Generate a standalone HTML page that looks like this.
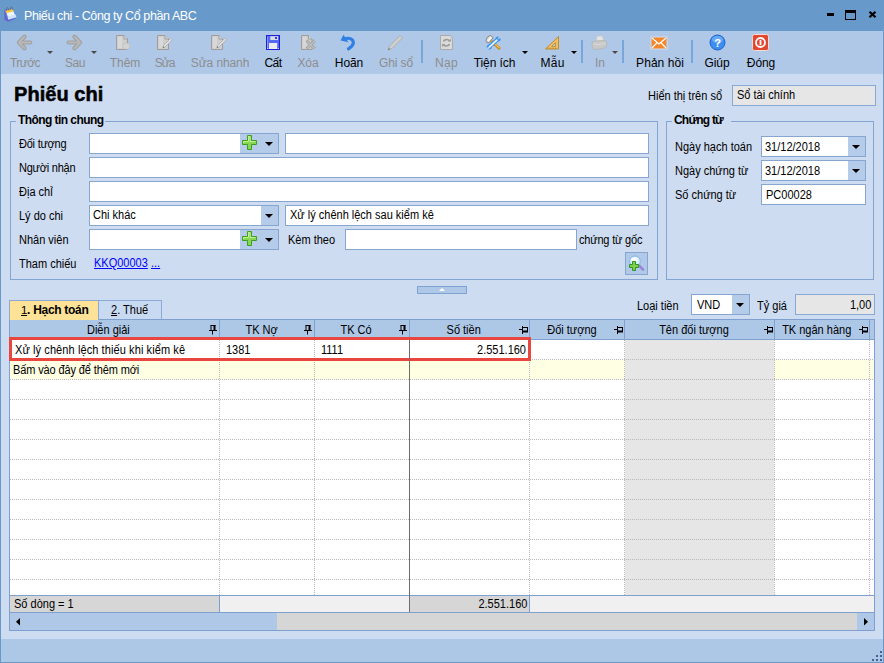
<!DOCTYPE html>
<html><head><meta charset="utf-8"><title>Phiếu chi</title>
<style>
*{box-sizing:border-box;margin:0;padding:0}
html,body{width:884px;height:663px;overflow:hidden}
body{position:relative;background:#6899cb;font-family:"Liberation Sans",sans-serif;font-size:11px;color:#000}
.a{position:absolute;white-space:nowrap}
.tl{font-size:12px;line-height:14px;top:56px;color:#8d8d8d;transform:translateX(-50%);letter-spacing:-0.100px}
.tl.on{color:#000}
.ic{top:34px;width:20px;height:18px}
.da{top:51px;width:0;height:0;border-left:3px solid transparent;border-right:3px solid transparent;border-top:3px solid #4a4a4a}
.da.on{border-top-color:#000}
.sep{top:40px;width:2px;height:23px;background:#7aa5da}
.lb{line-height:13px;font-size:12px;transform:scaleX(.917);transform-origin:0 50%}
.t{display:inline-block;font-size:12px;transform:scaleX(.917);transform-origin:0 50%}
.t.r{transform-origin:100% 50%}
.t.c{transform-origin:50% 50%}
.in{background:#fff;border:1px solid #86a5cf;height:21px;line-height:17px;padding-left:3px}
.btn{background:#b4cbe9}
.arr{width:0;height:0;border-left:4px solid transparent;border-right:4px solid transparent;border-top:4px solid #000}
.gb{border:1px solid #84a5d3}
.gt{font-weight:bold;background:#cddcf1;padding:0 2px;line-height:13px}
.hd{top:320px;height:19px;border-right:1px solid #7fa0d1;text-align:center;line-height:20px}
.hl{left:10px;width:864px;height:1px;background:repeating-linear-gradient(90deg,#b8b8b8 0 1px,transparent 1px 2px)}
.vl{top:340px;width:1px;height:256px;background:repeating-linear-gradient(180deg,#b8b8b8 0 1px,transparent 1px 2px)}
.pin{right:2px;top:5px}
.hd{padding-right:12px}
.ft{top:596px;height:16px;background:#d6d6d6;line-height:17px}
</style></head><body>
<div class="a" style="left:1px;top:31px;width:882px;height:631px;background:#cddcf1"></div>
<!-- TITLE -->
<div class="a" style="left:0;top:0;width:884px;height:31px;background:#6899cb">
<span class="a" style="left:24px;top:8px;font-size:12.500px;color:#fff;line-height:16px;letter-spacing:-0.400px">Phiếu chi - Công ty Cổ phần ABC</span>
<svg class="a" style="left:3px;top:5px" width="16" height="18" viewBox="0 0 16 18"><path d="M1.200 4.800 L9.500 3.500 L13 13.500 L5 16.700 L1.500 14.500 Z" fill="#6a5fd0"/><path d="M2.500 5.500 L9.800 4 L13.600 12.300 L5.200 14.800 Z" fill="#eef5ff" stroke="#3f8fe6" stroke-width="0.800"/><path d="M4.800 11 L12.500 9.500 L13.400 12.200 L5.300 14.600Z" fill="#cfe4fb"/><path d="M2.500 5.500 L9.800 4 L10.800 6.300 L3.300 8.300 Z" fill="#f6c63c"/><path d="M3.500 5.800 C3 1.500 5.500 1.500 5.700 5.500 M7.500 5 C7 0.800 9.500 0.800 9.700 4.800" fill="none" stroke="#6b6b78" stroke-width="0.900"/></svg>
<div class="a" style="left:827px;top:13px;width:7px;height:3px;background:#000"></div>
<div class="a" style="left:845px;top:10px;width:11px;height:10px;border:1px solid #000;border-top-width:3px"></div>
<svg class="a" style="left:868px;top:10px" width="9" height="9" viewBox="0 0 9 9"><path d="M1.500 1.700L7.500 7.300M7.500 1.700L1.500 7.300" stroke="#000" stroke-width="2.200"/></svg>
</div>
<!-- TOOLBAR -->
<div class="a" style="left:1px;top:31px;width:882px;height:43px;background:#afc8e8"></div>
<svg class="a" style="left:16px;top:34px" width="17" height="17" viewBox="0 0 17 17"><path d="M8.500 2.700 L3 8.500 L8.500 14.300 M4 8.500 H14.300" fill="none" stroke="#a0a0a0" stroke-width="4.200" stroke-linecap="round" stroke-linejoin="round"/><path d="M8.500 2.700 L3 8.500 L8.500 14.300 M4 8.500 H14.300" fill="none" stroke="#b8b8b8" stroke-width="2" stroke-linecap="round" stroke-linejoin="round"/></svg>
<svg class="a" style="left:66px;top:34px" width="17" height="17" viewBox="0 0 17 17"><path d="M8.500 2.700 L14 8.500 L8.500 14.300 M13 8.500 H2.700" fill="none" stroke="#a0a0a0" stroke-width="4.200" stroke-linecap="round" stroke-linejoin="round"/><path d="M8.500 2.700 L14 8.500 L8.500 14.300 M13 8.500 H2.700" fill="none" stroke="#b8b8b8" stroke-width="2" stroke-linecap="round" stroke-linejoin="round"/></svg>
<svg class="a" style="left:116px;top:35px" width="16" height="16" viewBox="0 0 16 16"><path d="M0.500 0.500 H8 L11.500 4 V14.500 H0.500 Z" fill="#cecece" stroke="#9e9e9e"/><path d="M8 0.500 V4 H11.500" fill="#dedede" stroke="#9e9e9e"/><path d="M2 2 H6 V13 H2 Z" fill="#d8d8d8"/><path d="M10 7.200 l1 1.300 1.600-0.600 0.100 1.600 1.700 0.500 -1 1.300 0.800 1.400 -1.700 0.300 -0.400 1.500 -1.500-0.800 -1.300 0.900 -0.700-1.500 -1.700-0.100 0.600-1.500 -1.100-1.200 1.500-0.600 0.100-1.600 1.500 0.500Z" fill="#d4d4d4" stroke="#bdbdbd" stroke-width="0.600"/></svg>
<svg class="a" style="left:157px;top:35px" width="17" height="16" viewBox="0 0 17 16"><path d="M0.500 0.500 H8 L11.500 4 V14.500 H0.500 Z" fill="#cecece" stroke="#9e9e9e"/><path d="M8 0.500 V4 H11.500" fill="#dedede" stroke="#9e9e9e"/><path d="M2 2 H6 V13 H2 Z" fill="#d8d8d8"/><path d="M13.800 3.300 L6.500 10.500 L5.800 12.700 L8 12 L15.200 4.800 Z" fill="#e2e2e2" stroke="#b0b0b0" stroke-width="0.900"/><path d="M5.800 12.700 L6.300 11.200 L7.300 12.200Z" fill="#555"/></svg>
<svg class="a" style="left:211px;top:35px" width="17" height="16" viewBox="0 0 17 16"><path d="M0.500 0.500 H8 L11.500 4 V14.500 H0.500 Z" fill="#cecece" stroke="#9e9e9e"/><path d="M8 0.500 V4 H11.500" fill="#dedede" stroke="#9e9e9e"/><path d="M2 2 H6 V13 H2 Z" fill="#d8d8d8"/><path d="M13.800 3.300 L6.500 10.500 L5.800 12.700 L8 12 L15.200 4.800 Z" fill="#e2e2e2" stroke="#b0b0b0" stroke-width="0.900"/><path d="M5.800 12.700 L6.300 11.200 L7.300 12.200Z" fill="#555"/></svg>
<svg class="a" style="left:266px;top:35px" width="14" height="15" viewBox="0 0 14 15"><rect x="0.500" y="0.500" width="13" height="14" fill="#5468f2" stroke="#1c1fdc"/><path d="M1.500 1.500 V13.500" stroke="#8b9bf8" stroke-width="1"/><rect x="4.300" y="1.200" width="7.700" height="3.800" fill="#dcdce4"/><rect x="9" y="2" width="2" height="2" fill="#2b3ce6"/><rect x="3" y="8" width="8.200" height="6" fill="#ececec"/><rect x="1.200" y="13" width="1" height="1" fill="#dfe4ff"/><rect x="11.800" y="13" width="1" height="1" fill="#dfe4ff"/></svg>
<svg class="a" style="left:301px;top:35px" width="16" height="16" viewBox="0 0 16 16"><path d="M0.500 0.500 H7.500 L11 4 V14.500 H0.500 Z" fill="#cecece" stroke="#9e9e9e"/><path d="M7.500 0.500 V4 H11" fill="#dedede" stroke="#9e9e9e"/><path d="M2 2 H5.500 V13 H2 Z" fill="#d8d8d8"/><path d="M5.500 5.500 L13.800 13.800 M13.800 5.500 L5.500 13.800" stroke="#a2a2a2" stroke-width="3"/><path d="M5.500 5.500 L13.800 13.800 M13.800 5.500 L5.500 13.800" stroke="#c0c0c0" stroke-width="1.200"/></svg>
<svg class="a" style="left:340px;top:34px" width="17" height="17" viewBox="0 0 17 17"><path d="M4.500 5.200 C9 3 14 5 13.200 9.500 C12.800 12 10.500 13.500 8.500 14.800" fill="none" stroke="#2f80e4" stroke-width="3.200" stroke-linecap="round"/><path d="M0.500 6.500 L3.500 0.800 L8.500 8.200 Z" fill="#2f80e4"/></svg>
<svg class="a" style="left:386px;top:34px" width="18" height="17" viewBox="0 0 18 17"><path d="M14 1.500 L16.500 4 L6 14.500 L2 16 L3.500 12 Z" fill="#cfcfcf" stroke="#ababab" stroke-width="0.900"/><path d="M2 16 L2.800 13.800 L4.200 15.200Z" fill="#777"/></svg>
<svg class="a" style="left:440px;top:35px" width="14" height="16" viewBox="0 0 14 16"><path d="M0.500 0.500 H10 L12.500 3 V14.500 H0.500 Z" fill="#dadada" stroke="#ababab"/><path d="M3.500 6.500 a3.200 2.600 0 0 1 6 -0.500 M9.500 9 a3.200 2.600 0 0 1 -6 0.500" fill="none" stroke="#9c9c9c" stroke-width="1.700"/><path d="M8 6.500 h3 v-3z M5 9 h-3 v3z" fill="#9c9c9c"/></svg>
<svg class="a" style="left:485px;top:34px" width="18" height="17" viewBox="0 0 18 17"><path d="M6.500 7 L14 14.200" stroke="#c98a22" stroke-width="3" stroke-linecap="round"/><path d="M6.500 6.600 L14 13.800" stroke="#f0c04a" stroke-width="1.200" stroke-linecap="round"/><path d="M1 6.500 L2.200 3.300 L5.300 1.300 L8.300 3.600 L4 8.800 L1.800 8.500Z" fill="#d9d9d9" stroke="#777" stroke-width="0.800"/><path d="M2.500 6 L5.500 3 L6.800 4 L3.500 7.500Z" fill="#f8f8f8"/><path d="M4.500 12.500 L12.500 5.500" stroke="#3b94ea" stroke-width="4" stroke-linecap="butt"/><circle cx="4.200" cy="13" r="2.500" fill="#3b94ea"/><circle cx="13" cy="5" r="2.500" fill="#3b94ea"/><path d="M3.500 13.800 L11.800 6.200" stroke="#e3f2fd" stroke-width="1.800" stroke-linecap="round"/><path d="M2 15.500 L4 13.200" stroke="#afc8e8" stroke-width="1.600"/><path d="M15.300 2.500 L13.200 4.800" stroke="#afc8e8" stroke-width="1.600"/></svg>
<svg class="a" style="left:544px;top:35px" width="16" height="15" viewBox="0 0 16 15"><path d="M14.500 1.500 V14 H1.500 Z" fill="#efc062" stroke="#c08c2c"/><path d="M11.500 7.500 V11.500 H7.500 Z" fill="#afc8e8" stroke="#c08c2c" stroke-width="0.800"/><path d="M4 14 v-1.500 M6.500 14 v-1.500 M9 14 v-1.500 M11.500 14 v-1.500" stroke="#b07c20" stroke-width="0.700"/></svg>
<svg class="a" style="left:591px;top:35px" width="17" height="16" viewBox="0 0 17 16"><path d="M5.500 1 L11.500 0.800 L13 6 L5 6.500 Z" fill="#e3e3e3" stroke="#c2c2c2" stroke-width="0.800"/><path d="M1 8.500 Q1 6.500 3.500 6 L12.500 5.500 Q15.500 5.500 15.800 8 L15.500 11 Q15 13 12 13.500 L5 14.500 Q1.500 14.500 1.200 12 Z" fill="#c9c9c9" stroke="#b2b2b2" stroke-width="0.800"/><path d="M2 9 Q8 10.500 15 8" fill="none" stroke="#dadada" stroke-width="1"/></svg>
<svg class="a" style="left:650px;top:36px" width="18" height="14" viewBox="0 0 18 14"><rect x="0.500" y="0.500" width="17" height="13" fill="#cfe0f3"/><rect x="1.500" y="1.500" width="15" height="11" fill="#f5862c"/><path d="M2 2 L9 8 L16 2 M2 12 L7.200 6.500 M16 12 L10.800 6.500" fill="none" stroke="#fff" stroke-width="1.100"/></svg>
<svg class="a" style="left:709px;top:34px" width="17" height="17" viewBox="0 0 17 17"><circle cx="8.500" cy="8.500" r="7.500" fill="#3b8df0" stroke="#1f62c8"/><ellipse cx="8.500" cy="5.500" rx="5.500" ry="3.500" fill="#7db7fa" opacity="0.700"/><text x="8.500" y="12.500" font-family="Liberation Sans, sans-serif" font-size="11" font-weight="bold" fill="#fff" text-anchor="middle">?</text></svg>
<svg class="a" style="left:752px;top:34px" width="17" height="17" viewBox="0 0 17 17"><rect x="0.500" y="0.500" width="16" height="16" rx="2" fill="#e2472f" stroke="#f6d9d2"/><circle cx="8.500" cy="8.500" r="4.500" fill="none" stroke="#fff" stroke-width="1.800"/><path d="M8.500 6 V11" stroke="#fff" stroke-width="1.800"/></svg>
<span class="a tl" style="left:25px;letter-spacing:-0.550px">Trước</span>
<span class="a tl" style="left:75px;letter-spacing:-0.500px">Sau</span>
<span class="a tl" style="left:125px">Thêm</span>
<span class="a tl" style="left:164.5px;letter-spacing:-1px;font-size:12px">Sửa</span>
<span class="a tl" style="left:220px">Sửa nhanh</span>
<span class="a tl on" style="left:273px;letter-spacing:-0.500px">Cất</span>
<span class="a tl" style="left:308px">Xóa</span>
<span class="a tl on" style="left:349px">Hoãn</span>
<span class="a tl" style="left:396px">Ghi sổ</span>
<span class="a tl" style="left:446.500px;letter-spacing:0.400px">Nạp</span>
<span class="a tl on" style="left:494.500px">Tiện ích</span>
<span class="a tl on" style="left:552.500px;letter-spacing:0.300px">Mẫu</span>
<span class="a tl" style="left:600px">In</span>
<span class="a tl on" style="left:660px;letter-spacing:0.050px">Phản hồi</span>
<span class="a tl on" style="left:717px">Giúp</span>
<span class="a tl on" style="left:761px">Đóng</span>
<div class="a da" style="left:47px"></div>
<div class="a da" style="left:91px"></div>
<div class="a da on" style="left:522px"></div>
<div class="a da on" style="left:571px"></div>
<div class="a da" style="left:612px"></div>
<div class="a sep" style="left:421px"></div>
<div class="a sep" style="left:581px"></div>
<div class="a sep" style="left:622px"></div>
<div class="a sep" style="left:691px"></div>
<!-- HEADER -->
<div class="a" style="left:14px;top:81.500px;font-size:20px;font-weight:bold;line-height:24px;-webkit-text-stroke:0.500px #000;letter-spacing:0.050px">Phiếu chi</div>
<span class="a lb" style="left:648px;top:90px">Hiển thị trên sổ</span>
<div class="a" style="left:732px;top:85px;width:144px;height:21px;background:#e6e6e6;border:1px solid #88a8d6;line-height:19px;padding-left:4px"><span class="t">Sổ tài chính</span></div>
<!-- GROUP 1 -->
<div class="a gb" style="left:10px;top:121px;width:648px;height:159px"></div>
<span class="a gt" style="left:16px;top:114px;font-size:12px;letter-spacing:-0.570px">Thông tin chung</span>
<span class="a lb" style="left:19px;top:138px;letter-spacing:-0.250px">Đối tượng</span>
<span class="a lb" style="left:19px;top:162px;letter-spacing:-0.250px">Người nhận</span>
<span class="a lb" style="left:19px;top:186px">Địa chỉ</span>
<span class="a lb" style="left:19px;top:210px">Lý do chi</span>
<span class="a lb" style="left:19px;top:234px">Nhân viên</span>
<span class="a lb" style="left:19px;top:258px">Tham chiếu</span>
<div class="a in" style="left:89px;top:133px;width:190px"></div>
<div class="a btn" style="left:240px;top:134px;width:38px;height:19px"></div>
<div class="a arr" style="left:265px;top:142px"></div>
<svg class="a" style="left:242px;top:135px" width="15" height="15" viewBox="0 0 15 15"><path d="M5.500 0.500 H9.500 V5.500 H14.500 V9.500 H9.500 V14.500 H5.500 V9.500 H0.500 V5.500 H5.500 Z" fill="#86d94f" stroke="#3f9d22"/><path d="M6.500 1.500 H8 V6.500 H13.500 M6.500 1.500 V6.500 H1.500 V8" fill="none" stroke="#c3f09b" stroke-width="1"/></svg>
<div class="a in" style="left:285px;top:133px;width:364px"></div>
<div class="a in" style="left:89px;top:157px;width:560px"></div>
<div class="a in" style="left:89px;top:181px;width:560px"></div>
<div class="a in" style="left:89px;top:205px;width:190px;line-height:18px"><span class="t">Chi khác</span></div>
<div class="a btn" style="left:261px;top:206px;width:17px;height:19px"></div>
<div class="a arr" style="left:265px;top:214px"></div>
<div class="a in" style="left:285px;top:205px;width:364px;padding-left:4px;line-height:19px"><span class="t">Xử lý chênh lệch sau kiểm kê</span></div>
<div class="a in" style="left:89px;top:229px;width:190px"></div>
<div class="a btn" style="left:240px;top:230px;width:38px;height:19px"></div>
<div class="a arr" style="left:265px;top:238px"></div>
<svg class="a" style="left:242px;top:231px" width="15" height="15" viewBox="0 0 15 15"><path d="M5.500 0.500 H9.500 V5.500 H14.500 V9.500 H9.500 V14.500 H5.500 V9.500 H0.500 V5.500 H5.500 Z" fill="#86d94f" stroke="#3f9d22"/><path d="M6.500 1.500 H8 V6.500 H13.500 M6.500 1.500 V6.500 H1.500 V8" fill="none" stroke="#c3f09b" stroke-width="1"/></svg>
<span class="a lb" style="left:288px;top:234px">Kèm theo</span>
<div class="a in" style="left:345px;top:229px;width:232px"></div>
<span class="a lb" style="left:579px;top:234px;letter-spacing:-0.200px">chứng từ gốc</span>
<span class="a lb" style="left:94px;top:257px;color:#0000ff;text-decoration:underline">KKQ00003</span>
<span class="a lb" style="left:151px;top:257px;color:#0000ff;text-decoration:underline">...</span>
<div class="a" style="left:625px;top:252px;width:23px;height:23px;background:#b1c9e8;border:1px solid #86a5cf"></div>
<svg class="a" style="left:628px;top:255px" width="18" height="18" viewBox="0 0 18 18"><path d="M11 10.500 L15 14.500" stroke="#9a86dc" stroke-width="2.600" stroke-linecap="round"/><circle cx="7" cy="6.300" r="5.300" fill="#d8ecfb" stroke="#7fb6ea" stroke-width="1"/><ellipse cx="6.500" cy="4.500" rx="3.500" ry="2.200" fill="#fff" opacity="0.800"/><path d="M4.500 6.500 H7.500 V9.500 H10.500 V12.500 H7.500 V15.500 H4.500 V12.500 H1.500 V9.500 H4.500 Z" fill="#7fd04a" stroke="#2f9420" stroke-width="1"/></svg>
<!-- GROUP 2 -->
<div class="a gb" style="left:666px;top:121px;width:208px;height:159px"></div>
<span class="a gt" style="left:672px;top:114px;padding-right:8px;font-size:12px;letter-spacing:-0.800px">Chứng từ</span>
<span class="a lb" style="left:675px;top:141px">Ngày hạch toán</span>
<span class="a lb" style="left:675px;top:165px">Ngày chứng từ</span>
<span class="a lb" style="left:675px;top:189px">Số chứng từ</span>
<div class="a in" style="left:761px;top:136px;width:105px;height:21px;line-height:20px"><span class="t">31/12/2018</span></div>
<div class="a btn" style="left:848px;top:137px;width:17px;height:19px"></div>
<div class="a arr" style="left:852px;top:145px"></div>
<div class="a in" style="left:761px;top:160px;width:105px;height:21px;line-height:20px"><span class="t">31/12/2018</span></div>
<div class="a btn" style="left:848px;top:161px;width:17px;height:19px"></div>
<div class="a arr" style="left:852px;top:169px"></div>
<div class="a in" style="left:761px;top:184px;width:105px;height:21px;line-height:20px;padding-left:4px"><span class="t">PC00028</span></div>
<!-- collapse -->
<div class="a" style="left:417px;top:286px;width:50px;height:8px;background:#afc8e8;border:1px solid #7fa2d3"></div>
<div class="a" style="left:439px;top:288px;width:0;height:0;border-left:3px solid transparent;border-right:3px solid transparent;border-bottom:3px solid #fff"></div>
<!-- TABS -->
<div class="a" style="left:9px;top:300px;width:90px;height:20px;background:#fde298;border:1px solid #8caad3;border-bottom:none;line-height:18px;padding-left:11px;font-weight:bold;z-index:3;font-size:12px;letter-spacing:-0.300px"><u style="font-weight:normal;font-size:11.500px">1</u>. Hạch toán</div>
<div class="a" style="left:99px;top:300px;width:63px;height:20px;background:#c8daf2;border:1px solid #8caad3;border-left:none;line-height:18px;padding-left:12px"><span class="t"><u>2</u>. Thuế</span></div>
<span class="a lb" style="left:637px;top:300px">Loại tiền</span>
<div class="a in" style="left:691px;top:294px;width:59px;height:21px;line-height:20px;padding-left:5px"><span class="t">VND</span></div>
<div class="a btn" style="left:732px;top:295px;width:17px;height:19px"></div>
<div class="a arr" style="left:736px;top:303px"></div>
<span class="a lb" style="left:757px;top:300px">Tỷ giá</span>
<div class="a" style="left:795px;top:294px;width:80px;height:21px;background:#e6e6e6;border:1px solid #88a8d6;line-height:20px;text-align:right;padding-right:3px"><span class="t r">1,00</span></div>
<!-- GRID -->
<div class="a" style="left:9px;top:319px;width:866px;height:312px;background:#fff;border:1px solid #7f9fd0"></div>
<div class="a" style="left:10px;top:320px;width:864px;height:20px;background:#adc7e7;border-bottom:1px solid #7fa0d1"></div>
<div class="a" style="left:10px;top:360px;width:864px;height:19px;background:#ffffe4"></div>
<div class="a" style="left:625px;top:340px;width:149px;height:256px;background:#e6e6e6"></div>
<div class="a hl" style="top:359px"></div>
<div class="a hl" style="top:379px"></div>
<div class="a hl" style="top:399px"></div>
<div class="a hl" style="top:419px"></div>
<div class="a hl" style="top:439px"></div>
<div class="a hl" style="top:459px"></div>
<div class="a hl" style="top:479px"></div>
<div class="a hl" style="top:499px"></div>
<div class="a hl" style="top:519px"></div>
<div class="a hl" style="top:539px"></div>
<div class="a hl" style="top:559px"></div>
<div class="a hl" style="top:579px"></div>
<div class="a vl" style="left:219px"></div>
<div class="a vl" style="left:314px"></div>
<div class="a vl" style="left:529px"></div>
<div class="a vl" style="left:624px"></div>
<div class="a vl" style="left:774px"></div>
<div class="a vl" style="left:869px"></div>
<div class="a hd" style="left:10px;width:210px"><span class="t c">Diễn giải</span><svg class="a pin" width="8" height="10" viewBox="0 0 8 10"><path d="M1.500 0.500H6.500M2 0.500V5.500M0 5.500H8M3.500 5.500V9.500" stroke="#000" fill="none"/><path d="M5.500 0V5.500" stroke="#000" stroke-width="2" fill="none"/></svg></div>
<div class="a hd" style="left:221px;width:94px"><span class="t c">TK Nợ</span><svg class="a pin" width="8" height="10" viewBox="0 0 8 10"><path d="M1.500 0.500H6.500M2 0.500V5.500M0 5.500H8M3.500 5.500V9.500" stroke="#000" fill="none"/><path d="M5.500 0V5.500" stroke="#000" stroke-width="2" fill="none"/></svg></div>
<div class="a hd" style="left:316px;width:94px"><span class="t c">TK Có</span><svg class="a pin" width="8" height="10" viewBox="0 0 8 10"><path d="M1.500 0.500H6.500M2 0.500V5.500M0 5.500H8M3.500 5.500V9.500" stroke="#000" fill="none"/><path d="M5.500 0V5.500" stroke="#000" stroke-width="2" fill="none"/></svg></div>
<div class="a hd" style="left:411px;width:119px"><span class="t c">Số tiền</span><svg class="a pin" style="right:1px;top:6px" width="9" height="8" viewBox="0 0 9 8"><path d="M0 3.500H3.500M3.500 0V8M3.500 1.500H8.500M8.500 1V6" stroke="#000" fill="none"/><path d="M3.500 5.500H9" stroke="#000" stroke-width="2" fill="none"/></svg></div>
<div class="a hd" style="left:531px;width:94px"><span class="t c">Đối tượng</span><svg class="a pin" style="right:1px;top:6px" width="9" height="8" viewBox="0 0 9 8"><path d="M0 3.500H3.500M3.500 0V8M3.500 1.500H8.500M8.500 1V6" stroke="#000" fill="none"/><path d="M3.500 5.500H9" stroke="#000" stroke-width="2" fill="none"/></svg></div>
<div class="a hd" style="left:626px;width:149px"><span class="t c">Tên đối tượng</span><svg class="a pin" style="right:1px;top:6px" width="9" height="8" viewBox="0 0 9 8"><path d="M0 3.500H3.500M3.500 0V8M3.500 1.500H8.500M8.500 1V6" stroke="#000" fill="none"/><path d="M3.500 5.500H9" stroke="#000" stroke-width="2" fill="none"/></svg></div>
<div class="a hd" style="left:776px;width:94px"><span class="t c">TK ngân hàng</span><svg class="a pin" style="right:1px;top:6px" width="9" height="8" viewBox="0 0 9 8"><path d="M0 3.500H3.500M3.500 0V8M3.500 1.500H8.500M8.500 1V6" stroke="#000" fill="none"/><path d="M3.500 5.500H9" stroke="#000" stroke-width="2" fill="none"/></svg></div>
<span class="a lb" style="left:15px;top:344px;letter-spacing:0.100px">Xử lý chênh lệch thiếu khi kiểm kê</span>
<span class="a lb" style="left:226px;top:344px">1381</span>
<span class="a lb" style="left:321px;top:344px">1111</span>
<span class="a lb" style="left:400px;top:344px;width:126px;text-align:right;transform-origin:100% 50%">2.551.160</span>
<span class="a lb" style="left:13px;top:364px;letter-spacing:-0.130px">Bấm vào đây để thêm mới</span>
<div class="a" style="left:9px;top:337px;width:522px;height:24px;border:3px solid #e8463f"></div>
<div class="a" style="left:10px;top:595px;width:864px;height:18px;background:#f0f0f0;border-top:1px solid #7f9fd0;border-bottom:1px solid #7f9fd0"></div>
<div class="a ft" style="left:10px;width:209px;padding-left:4px"><span class="t">Số dòng = 1</span></div>
<div class="a ft" style="left:410px;width:119px;text-align:right;padding-right:2px"><span class="t r">2.551.160</span></div>
<div class="a" style="left:219px;top:596px;width:1px;height:16px;background:#7f9fd0"></div>
<div class="a" style="left:529px;top:596px;width:1px;height:16px;background:#7f9fd0"></div>
<div class="a" style="left:10px;top:613px;width:864px;height:17px;background:#d6d6d6"></div>
<div class="a" style="left:10px;top:613px;width:267px;height:17px;background:#afc8e8"></div>
<div class="a" style="left:857px;top:613px;width:17px;height:17px;background:#afc8e8"></div>
<svg class="a" style="left:16px;top:618px" width="4" height="8" viewBox="0 0 4 8"><path d="M4 0V7.500L0 3.750Z" fill="#000"/></svg>
<svg class="a" style="left:864px;top:618px" width="4" height="8" viewBox="0 0 4 8"><path d="M0 0V7.500L4 3.750Z" fill="#000"/></svg>
<div class="a" style="left:409px;top:340px;width:1px;height:272px;background:#6e6e6e"></div>
<!-- STATUS -->
<div class="a" style="left:1px;top:639px;width:882px;height:23px;background:#adc8e7"></div>
<div class="a" style="left:872px;top:659px;width:2px;height:2px;background:#45618c"></div><div class="a" style="left:876px;top:659px;width:2px;height:2px;background:#45618c"></div><div class="a" style="left:880px;top:659px;width:2px;height:2px;background:#45618c"></div><div class="a" style="left:876px;top:655px;width:2px;height:2px;background:#45618c"></div><div class="a" style="left:880px;top:655px;width:2px;height:2px;background:#45618c"></div><div class="a" style="left:880px;top:651px;width:2px;height:2px;background:#45618c"></div>
</body></html>
